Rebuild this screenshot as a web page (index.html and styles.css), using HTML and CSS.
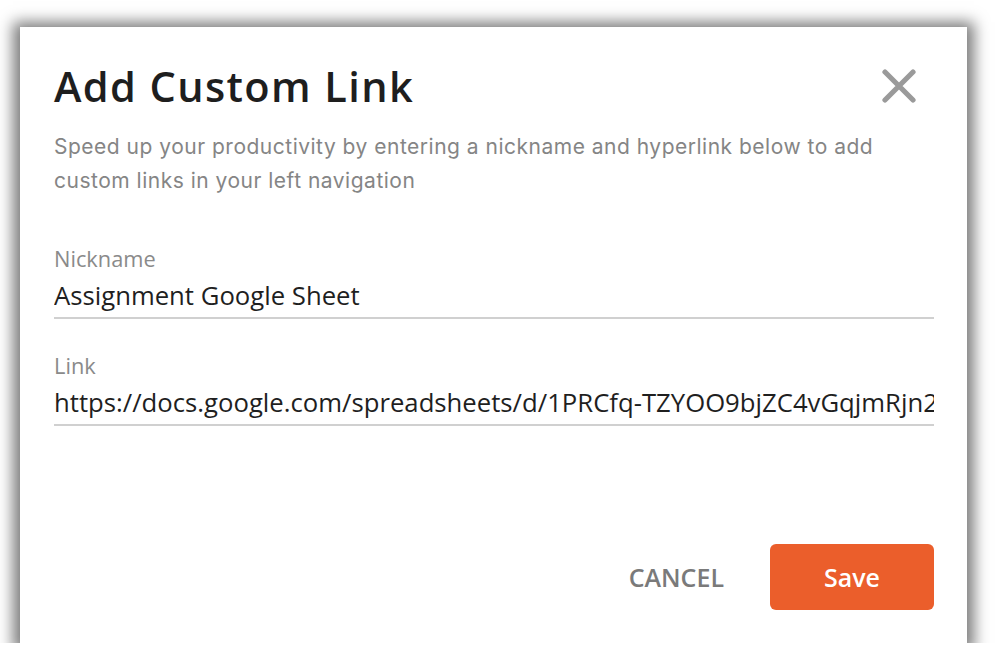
FILE: index.html
```html
<!DOCTYPE html>
<html lang="en">
<head>
<meta charset="utf-8">
<title>Add Custom Link</title>
<link rel="stylesheet" href="styles.css">
</head>
<body>
<div class="dialog" role="dialog" aria-labelledby="dlg-title">
  <div class="header">
    <h1 id="dlg-title" class="title">Add Custom Link</h1>
    <button class="close" aria-label="Close">
      <svg width="34" height="34" viewBox="0 0 34 34"><path d="M3 3 L31 31 M31 3 L3 31" stroke="#9a9a9a" stroke-width="5.2" stroke-linecap="round" fill="none"/></svg>
    </button>
  </div>
  <p class="desc">Speed up your productivity by entering a nickname and hyperlink below to add custom links in your left navigation</p>
  <div class="field">
    <label class="label" for="nick">Nickname</label>
    <input class="input" id="nick" type="text" value="Assignment Google Sheet">
  </div>
  <div class="field">
    <label class="label" for="link">Link</label>
    <input class="input" id="link" type="text" value="https://docs.google.com/spreadsheets/d/1PRCfq-TZYOO9bjZC4vGqjmRjn2k/edit#gid=0">
  </div>
  <div class="footer">
    <button class="btn-cancel">CANCEL</button>
    <button class="btn-save">Save</button>
  </div>
</div>
</body>
</html>
```
FILE: styles.css
```css
html, body {
  margin: 0;
  background: #ffffff;
}
body {
  padding: 27px 0 0 20px;
}
.dialog {
  box-sizing: border-box;
  width: 947px;
  height: 616px;
  background: #fff;
  box-shadow: 0 2px 14px 7px rgba(0,0,0,0.52);
  padding: 35px 33px 33px 34px;
  display: flex;
  flex-direction: column;
}
.header {
  display: flex;
  align-items: center;
  justify-content: space-between;
}
.title {
  margin: 0;
  font-family: "Open Sans", sans-serif;
  font-weight: 600;
  font-size: 41.5px;
  line-height: 48px;
  color: #1e1e1e;
  letter-spacing: 1.4px;
}
.close {
  border: 0;
  background: none;
  padding: 0;
  margin-right: 18px;
  width: 34px;
  height: 34px;
  display: flex;
}
.desc {
  margin: 20px 0 0;
  font-family: Inter, sans-serif;
  font-size: 21px;
  line-height: 34px;
  letter-spacing: 0.5px;
  color: #858585;
}
.field {
  display: flex;
  flex-direction: column;
}
.desc + .field { margin-top: 47px; }
.field + .field { margin-top: 33px; }
.label {
  font-family: "Open Sans", sans-serif;
  font-size: 21.8px;
  line-height: 28px;
  color: #8a8a8a;
}
.input {
  box-sizing: content-box;
  height: 44px;
  padding: 0;
  margin: 0;
  border: 0;
  border-bottom: 2px solid #d0d0d0;
  font-family: "Open Sans", sans-serif;
  font-size: 25.7px;
  color: #1f1f1f;
  background: transparent;
  outline: none;
}
.footer {
  margin-top: auto;
  display: flex;
  justify-content: flex-end;
  align-items: center;
  gap: 46px;
}
.btn-cancel {
  border: 0;
  background: none;
  padding: 0;
  font-family: "Open Sans", sans-serif;
  font-weight: 600;
  font-size: 25px;
  color: #7a7a7a;
}
.btn-save {
  width: 164px;
  height: 66px;
  border: 0;
  border-radius: 6px;
  background: #eb5e2b;
  color: #fff;
  font-family: "Open Sans", sans-serif;
  font-weight: 600;
  font-size: 25px;
}
```
